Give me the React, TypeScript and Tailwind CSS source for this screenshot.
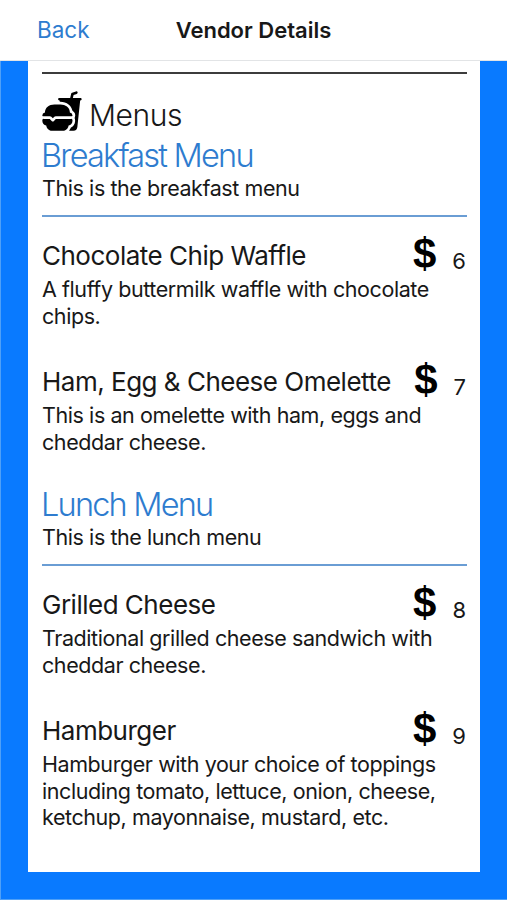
import { FC } from "react";
import { IoFastFood } from "react-icons/io5";

type MenuItem = {
  name: string;
  price: number;
  description: string[];
};

type Menu = {
  title: string;
  description: string;
  items: MenuItem[];
};

const menus: Menu[] = [
  {
    title: "Breakfast Menu",
    description: "This is the breakfast menu",
    items: [
      {
        name: "Chocolate Chip Waffle",
        price: 6,
        description: ["A fluffy buttermilk waffle with chocolate", "chips."],
      },
      {
        name: "Ham, Egg & Cheese Omelette",
        price: 7,
        description: ["This is an omelette with ham, eggs and", "cheddar cheese."],
      },
    ],
  },
  {
    title: "Lunch Menu",
    description: "This is the lunch menu",
    items: [
      {
        name: "Grilled Cheese",
        price: 8,
        description: ["Traditional grilled cheese sandwich with", "cheddar cheese."],
      },
      {
        name: "Hamburger",
        price: 9,
        description: [
          "Hamburger with your choice of toppings",
          "including tomato, lettuce, onion, cheese,",
          "ketchup, mayonnaise, mustard, etc.",
        ],
      },
    ],
  },
];

const MenuRow: FC<{ item: MenuItem }> = ({ item }) => (
  <li className="pb-[34px]">
    <div className="flex h-[39px] items-start justify-between whitespace-nowrap">
      <h3 className="text-[26px] leading-[37px] tracking-[-0.5px]">{item.name}</h3>
      <div className="flex items-start">
        <span className="font-['Liberation_Sans',sans-serif] text-[42px] leading-[33px] font-bold text-black">
          $
        </span>
        <span className="ml-4 pt-[11px] pr-px text-[22px] leading-[26px]">{item.price}</span>
      </div>
    </div>
    <p className="text-[21.5px] leading-[26.5px] tracking-[-0.42px] whitespace-nowrap">
      {item.description.map((line) => (
        <span key={line} className="block">
          {line}
        </span>
      ))}
    </p>
  </li>
);

const MenuSection: FC<{ menu: Menu }> = ({ menu }) => (
  <section className="h-[349px]">
    <h2 className="-ml-px h-[40px] text-[32.5px] leading-[42px] font-light tracking-[-1.8px] text-[#2e7ccf]">
      {menu.title}
    </h2>
    <p className="text-[21.5px] leading-[26px] tracking-[-0.42px]">{menu.description}</p>
    <hr className="mt-[14px] mb-5 border-t-2 border-[#6a9dd4]" />
    <ul>
      {menu.items.map((item) => (
        <MenuRow key={item.name} item={item} />
      ))}
    </ul>
  </section>
);

const App: FC = () => {
  return (
    <div className="flex h-[900px] w-[507px] flex-col bg-[#097aff] font-['Inter',sans-serif] text-[#181818]">
      <header className="grid h-[61px] shrink-0 grid-cols-[1fr_auto_1fr] items-center border-b border-[#e2e4e6] bg-white px-[37px]">
        <button className="justify-self-start text-[22.5px] text-[#2e7ccf]">Back</button>
        <h1 className="text-[22px] font-semibold">Vendor Details</h1>
      </header>
      <div className="h-[839px] border-b border-l border-[#4fa0f7]">
        <main className="mr-[27px] ml-[27px] h-[811px] bg-white pr-[13px] pl-[13px]">
          <div className="pt-[11px]">
            <hr className="ml-px border-t-2 border-[#3c3c3c]" />
          </div>
          <div className="flex h-[61px] items-end gap-[6px]">
            <IoFastFood className="mb-[3px] size-[42px] text-black" />
            <h2 className="pb-px text-[30px] leading-[38px] font-light tracking-[-0.4px]">Menus</h2>
          </div>
          <div className="pl-px">
            {menus.map((menu) => (
              <MenuSection key={menu.title} menu={menu} />
            ))}
          </div>
        </main>
      </div>
    </div>
  );
};

export default App;
